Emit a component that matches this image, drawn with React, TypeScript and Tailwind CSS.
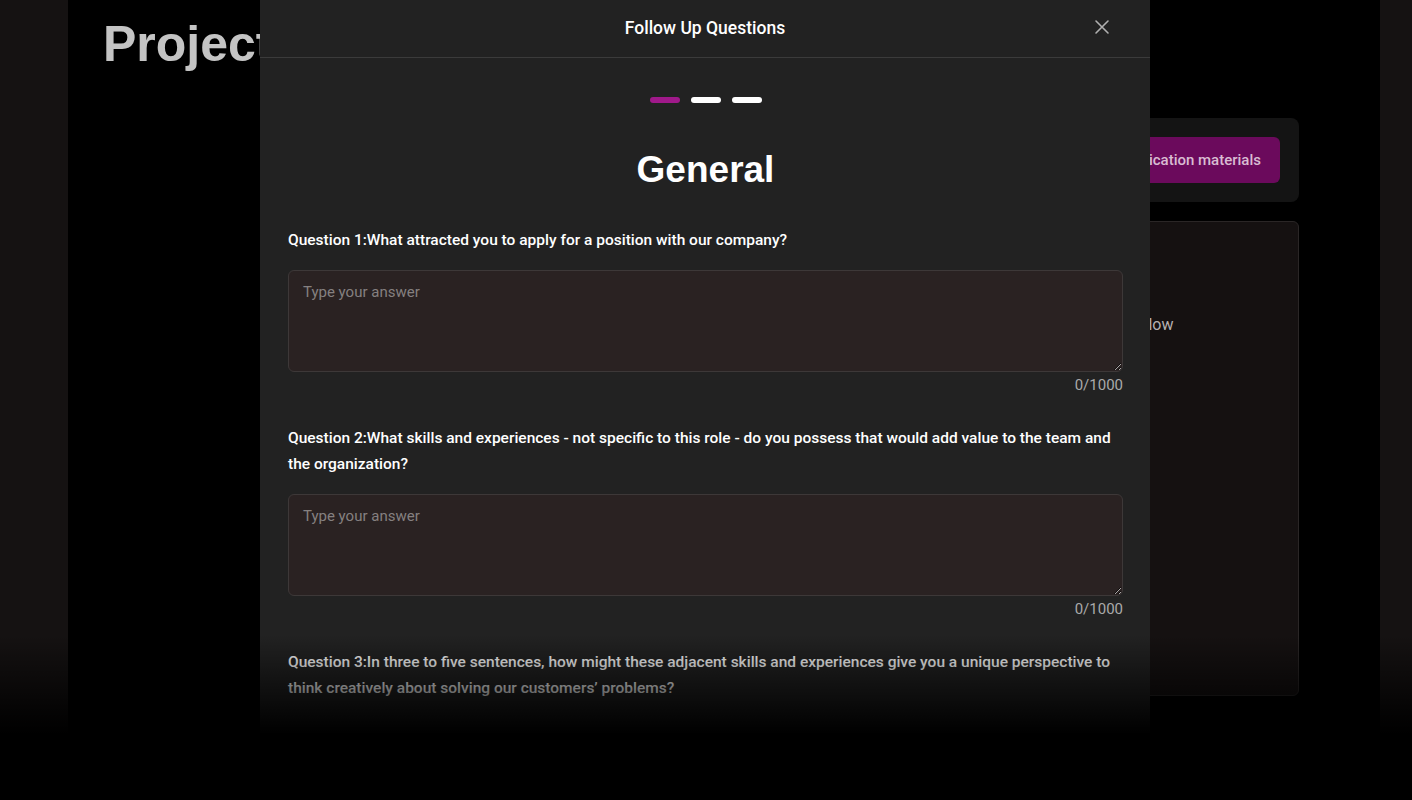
import React from 'react';

const questions = [
  'Question 1:What attracted you to apply for a position with our company?',
  'Question 2:What skills and experiences - not specific to this role - do you possess that would add value to the team and the organization?',
  'Question 3:In three to five sentences, how might these adjacent skills and experiences give you a unique perspective to think creatively about solving our customers’ problems?',
];

function Background() {
  return (
    <div className="flex h-[800px] w-full bg-[#151212]">
      <div className="w-[68px]" />
      <main className="flex flex-1 gap-8 bg-black pl-[35px] pr-[81px] pt-[14px]">
        <div className="flex-1">
          <h1 className="text-[50px] font-bold leading-[60px] text-[#c4c4c4] [font-family:'Liberation_Sans',Arial,sans-serif]">
            Projects
          </h1>
        </div>
        <div className="flex w-[400px] flex-col gap-[19px] pt-[104px]">
          <div className="flex justify-end rounded-lg bg-[#141414] p-[19px]">
            <button className="h-[46px] rounded-md bg-[#6b0a5c] px-[19px] text-[15px] font-medium text-[#d9bcd2]">
              Upload application materials
            </button>
          </div>
          <div className="h-[475px] rounded-md border border-[#2a2626] bg-[#151111] pr-[124.5px] pt-[91px]">
            <p className="whitespace-nowrap text-right text-[16px] text-[#b5b0b0]">Complete the steps that follow</p>
          </div>
        </div>
      </main>
      <div className="w-[32px]" />
    </div>
  );
}

function Pill({ active }: { active?: boolean }) {
  return <span className={active ? 'h-[6px] w-[30px] rounded-full bg-[#a0198a]' : 'h-[6px] w-[30px] rounded-full bg-white'} />;
}

function Question({ text, withInput }: { text: string; withInput: boolean }) {
  return (
    <div className="mb-[30px]">
      <p className="text-[15.5px] font-medium leading-[26px] text-white">{text}</p>
      {withInput ? (
        <>
          <textarea
            placeholder="Type your answer"
            className="mt-[17px] block h-[102px] w-full resize-y rounded-md border border-[#3d3838] bg-[#2a2222] px-[14px] py-[11px] text-[15px] leading-[20px] text-white outline-none placeholder:text-[#858080]"
          />
          <div className="mt-[3px] text-right text-[15px] leading-[20px] text-[#aaaaaa]">0/1000</div>
        </>
      ) : null}
    </div>
  );
}

export default function App() {
  return (
    <div className="relative h-[800px] w-full overflow-hidden [font-family:Roboto,'Noto_Sans',sans-serif]">
      <Background />

      <div className="absolute left-[260px] top-0 h-[800px] w-[890px] bg-[#222222]">
        <header className="relative flex h-[58px] items-center justify-center border-b border-[#3b3b3b]">
          <h2 className="text-[17.5px] font-medium text-white">Follow Up Questions</h2>
          <button className="absolute right-[40px] top-[19px] text-[#b0b0b0]" aria-label="Close">
            <svg width="16" height="16" viewBox="0 0 16 16" fill="none" stroke="currentColor" strokeWidth="1.6" strokeLinecap="round">
              <path d="M2 2l12 12M14 2L2 14" />
            </svg>
          </button>
        </header>

        <div className="px-[28px] pr-[27px]">
          <div className="flex justify-center gap-[11px] pt-[39px]">
            <Pill active />
            <Pill />
            <Pill />
          </div>
          <h3 className="mt-[47px] text-center text-[37px] font-bold leading-[40px] text-white [font-family:'Liberation_Sans',Arial,sans-serif]">
            General
          </h3>
          <div className="mt-[37px]">
            {questions.map((q, i) => (
              <Question key={q} text={q} withInput={i < 2} />
            ))}
          </div>
        </div>
      </div>

      <div className="pointer-events-none absolute inset-x-0 bottom-0 h-[165px] bg-[linear-gradient(to_bottom,transparent,#000_60%)]" />
    </div>
  );
}
